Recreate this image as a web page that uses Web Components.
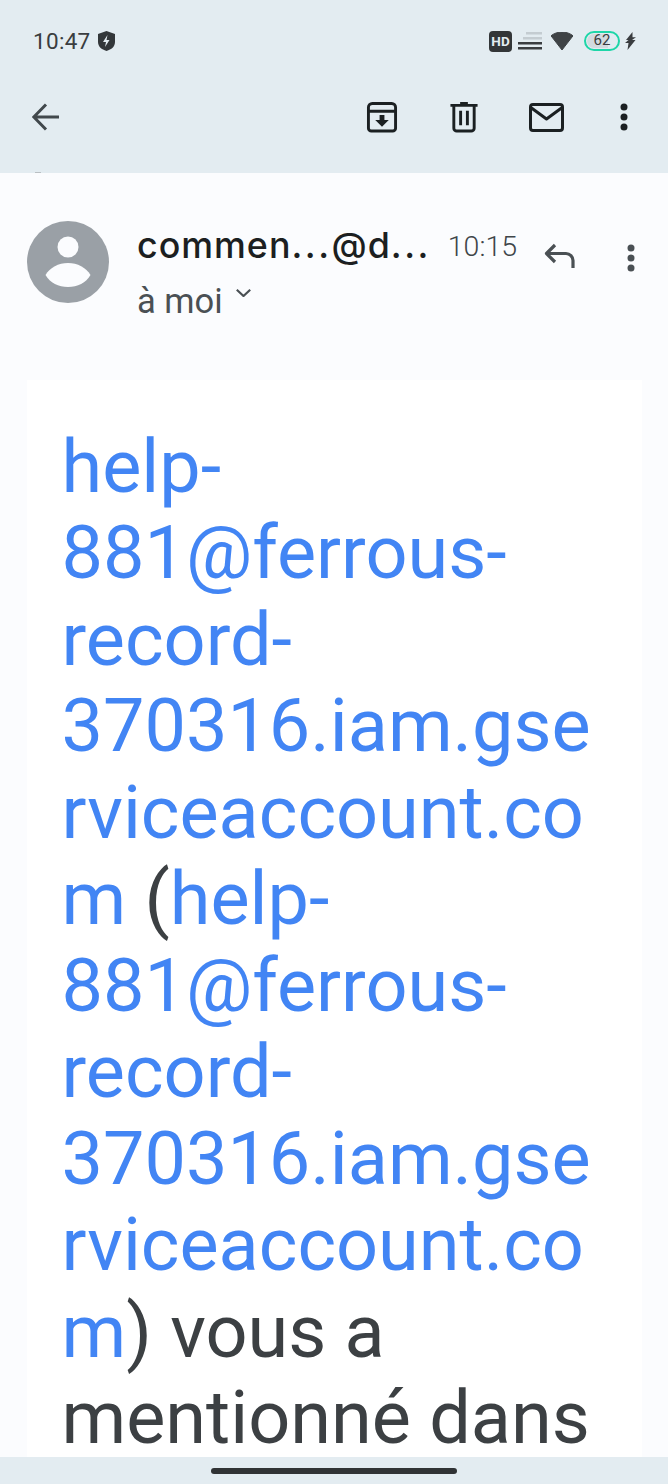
<!DOCTYPE html>
<html lang="fr">
<head>
<meta charset="utf-8">
<title>Mail</title>
<style>
    html, body {
        margin: 0;
        height: 100%;
        overflow: hidden;
    }

    body {
        display: flex;
        flex-direction: column;
        background: #fbfcfe;
        font-family: Roboto, sans-serif;
    }
</style>
</head>
<body>
<status-bar></status-bar>
<app-toolbar></app-toolbar>
<mail-header></mail-header>
<mail-body>
    <a>help-881@ferrous-record-370316.iam.gserviceaccount.com</a> (<a>help-881@ferrous-record-370316.iam.gserviceaccount.com</a>) vous a mentionné dans un commentaire
</mail-body>
<nav-bar></nav-bar>

<script>
class StatusBar extends HTMLElement {
    constructor() {
        super();
        this.attachShadow({ mode: 'open' });
        this.shadowRoot.innerHTML = `
            <style>
                :host {
                    display: flex;
                    align-items: center;
                    flex: none;
                    height: 82px;
                    box-sizing: border-box;
                    padding: 0 32px 0 33px;
                    background: #e3ecf1;
                    color: #3a3d40;
                    font-family: Roboto, sans-serif;
                }

                .time {
                    font-size: 22.5px;
                    letter-spacing: 0.3px;
                    margin-right: 7px;
                }

                .right {
                    margin-left: auto;
                    display: flex;
                    align-items: center;
                }

                svg { display: block; }

                .hd {
                    width: 23px;
                    height: 21px;
                    border-radius: 4px;
                    background: #333638;
                    color: #e3ecf1;
                    font-size: 13.5px;
                    font-weight: 700;
                    line-height: 21px;
                    text-align: center;
                    margin-right: 6px;
                }

                .battery {
                    box-sizing: border-box;
                    width: 36px;
                    height: 20px;
                    border: 2.5px solid #1ed6a8;
                    border-radius: 10px;
                    margin: 0 5px 0 11px;
                    font-size: 15px;
                    text-align: center;
                    background: linear-gradient(90deg, #d3dadf 0 70%, transparent 70%);
                    background-clip: content-box;
                    padding: 1px;
                }

                .battery span {
                    display: block;
                    line-height: 13px;
                }
            </style>

            <span class="time">10:47</span>
            <svg width="17" height="20" viewBox="0 0 17 20">
                <path fill="#33373a" d="M8.5 0 17 3v8c0 4.500-3.500 7.500-8.500 9C3.500 18.500 0 15.500 0 11V3z"/>
                <path fill="#e3ecf1" d="M9.500 4 5 11h3l-1 5 4.500-7h-3z"/>
            </svg>

            <div class="right">
                <div class="hd">HD</div>
                <svg width="24" height="18" viewBox="0 0 24 18">
                    <rect x="8" y="0" width="16" height="2.500" fill="#c4ccd1"/>
                    <rect x="5" y="5" width="19" height="2.500" fill="#c4ccd1"/>
                    <rect x="0" y="10" width="24" height="2.500" fill="#3a3d40"/>
                    <rect x="0" y="15" width="24" height="2.500" fill="#3a3d40"/>
                </svg>
                <svg style="margin-left:9px" width="22" height="18" viewBox="0 0 22 18">
                    <path fill="#3f4346" d="M11 0c4 0 8 1.300 11 3.800L11 18 0 3.800C3 1.300 7 0 11 0z" stroke="#3f4346" stroke-linejoin="round"/>
                </svg>
                <div class="battery"><span>62</span></div>
                <svg width="11" height="18" viewBox="0 0 11 18">
                    <path fill="#3a3d40" d="M7.500 0 1 8h2.500L0 11h3.500L2.500 18 10.500 8H7l4-2.800H7.500z"/>
                </svg>
            </div>
        `;
    }
}

class AppToolbar extends HTMLElement {
    constructor() {
        super();
        this.attachShadow({ mode: 'open' });
        this.shadowRoot.innerHTML = `
            <style>
                :host {
                    display: flex;
                    align-items: center;
                    flex: none;
                    position: relative;
                    height: 91px;
                    box-sizing: border-box;
                    padding: 0 40px 21px 32px;
                    background: #e3ecf1;
                }

                svg { display: block; }

                .actions {
                    margin-left: auto;
                    display: flex;
                    align-items: center;
                }

                .speck {
                    position: absolute;
                    left: 35px;
                    bottom: 0;
                    width: 6px;
                    height: 1px;
                    background: #b9bfc3;
                }
            </style>

            <svg width="28" height="28" viewBox="0 0 28 28" fill="none" stroke="#41484c" stroke-width="3">
                <path d="M27 14H3M14 1.500 1.800 14 14 26.500"/>
            </svg>

            <div class="actions">
                <svg width="32" height="31" viewBox="0 0 32 32" fill="none" stroke="#1b2022" stroke-width="3" stroke-linejoin="round">
                    <path d="M6 1.500h20a4 4 0 0 1 4 4V27a3 3 0 0 1-3 3H5a3 3 0 0 1-3-3V5.500a4 4 0 0 1 4-4zM2 9.500h28"/>
                    <path fill="#1b2022" stroke="none" d="M13.500 13.500h5v5h4.500L16 25.500 9 18.500h4.500z"/>
                </svg>
                <svg style="margin-left:52px" width="28" height="31" viewBox="0 0 28 32" fill="none" stroke="#1b2022" stroke-width="3">
                    <path d="M0 3.500h28M3.500 3.500V27a3 3 0 0 0 3 3h15a3 3 0 0 0 3-3V3.500"/>
                    <path stroke="#1b2022" d="M10 1.500h8"/>
                    <path d="M10.500 9v15M17.500 9v15"/>
                </svg>
                <svg style="margin-left:51px" width="35" height="29" viewBox="0 0 35 29" fill="none" stroke="#1b2022" stroke-width="3" stroke-linejoin="round">
                    <rect x="1.500" y="1.500" width="32" height="26" rx="2.500"/>
                    <path d="M2.500 5 17.500 16 32.500 5"/>
                </svg>
                <svg style="margin-left:56px" width="8" height="28" viewBox="0 0 8 28" fill="#1b2022">
                    <circle cx="4" cy="4" r="3.500"/>
                    <circle cx="4" cy="14" r="3.500"/>
                    <circle cx="4" cy="24" r="3.500"/>
                </svg>
            </div>

            <span class="speck"></span>
        `;
    }
}

class MailHeader extends HTMLElement {
    constructor() {
        super();
        this.attachShadow({ mode: 'open' });
        this.shadowRoot.innerHTML = `
            <style>
                :host {
                    display: flex;
                    flex: none;
                    height: 207px;
                    box-sizing: border-box;
                    padding: 48px 33px 0 27px;
                    background: #fbfcfe;
                    font-family: Inter, sans-serif;
                }

                svg { display: block; }

                .avatar {
                    flex: none;
                    margin-right: 28px;
                }

                .text {
                    width: 300px;
                    padding-top: 2px;
                }

                .from {
                    font-size: 35.8px;
                    letter-spacing: 1px;
                    font-weight: 500;
                    line-height: 44px;
                    color: #1c1f21;
                    white-space: nowrap;
                }

                .from span {
                    letter-spacing: 2.5px;
                }

                .to {
                    display: flex;
                    align-items: center;
                    font-family: Roboto, sans-serif;
                    font-size: 34.5px;
                    line-height: 44px;
                    color: #4a5054;
                    margin-top: 12px;
                }

                .to svg {
                    margin: -17px 0 0 13px;
                }

                .time {
                    font-family: Roboto, sans-serif;
                    font-size: 28.5px;
                    font-weight: 300;
                    line-height: 44px;
                    color: #3f4549;
                    margin: 4px 0 0 11px;
                    flex: none;
                }

                .reply {
                    margin: 22px 0 0 27px;
                    flex: none;
                }

                .more {
                    margin: 23px 0 0 52px;
                    flex: none;
                }
            </style>

            <svg class="avatar" width="82" height="82" viewBox="0 0 82 82">
                <circle cx="41" cy="41" r="41" fill="#9aa0a6"/>
                <circle cx="41" cy="26" r="10.500" fill="#fbfcfe"/>
                <path fill="#fbfcfe" d="M18.500 54C23 46.500 31.500 42 41 42s18 4.500 22.500 12C59 62 50.500 66 41 66s-18-4-22.500-12z"/>
            </svg>

            <div class="text">
                <div class="from">commen<span>...</span>@d<span>...</span></div>
                <div class="to">
                    à moi
                    <svg width="15" height="8" viewBox="0 0 15 8" fill="none" stroke="#4a5054" stroke-width="2.200">
                        <path d="M.8 .8 7.500 7 14.200 .8"/>
                    </svg>
                </div>
            </div>

            <div class="time">10:15</div>

            <svg class="reply" width="31" height="25" viewBox="0 0 31 25" fill="none" stroke="#4a5054" stroke-width="3.200" stroke-linejoin="round">
                <path d="M11 2 2.500 10.500 11 19M2.500 10.500H22a7 7 0 0 1 7 7V25"/>
            </svg>

            <svg class="more" width="8" height="28" viewBox="0 0 8 28" fill="#4a5054">
                <circle cx="4" cy="4" r="3.500"/>
                <circle cx="4" cy="14" r="3.500"/>
                <circle cx="4" cy="24" r="3.500"/>
            </svg>
        `;
    }
}

class MailBody extends HTMLElement {
    constructor() {
        super();
        this.attachShadow({ mode: 'open' });
        this.shadowRoot.innerHTML = `
            <style>
                :host {
                    display: block;
                    flex: 1;
                    min-height: 0;
                    overflow: hidden;
                    padding: 0 26px 0 27px;
                    background: #fbfcfe;
                }

                .card {
                    background: #fff;
                    padding: 44px 36px 0 34.5px;
                    font-family: Roboto, sans-serif;
                    font-size: 73.8px;
                    line-height: 86.45px;
                    color: #3c4043;
                    overflow-wrap: break-word;
                }

                ::slotted(a) {
                    color: #4285f4;
                }
            </style>

            <div class="card"><slot></slot></div>
        `;
    }
}

class NavBar extends HTMLElement {
    constructor() {
        super();
        this.attachShadow({ mode: 'open' });
        this.shadowRoot.innerHTML = `
            <style>
                :host {
                    display: flex;
                    justify-content: center;
                    flex: none;
                    height: 27px;
                    box-sizing: border-box;
                    padding-top: 11px;
                    background: #e3ecf1;
                }

                .pill {
                    width: 246px;
                    height: 6px;
                    border-radius: 3px;
                    background: #303335;
                }
            </style>

            <div class="pill"></div>
        `;
    }
}

customElements.define('status-bar', StatusBar);
customElements.define('app-toolbar', AppToolbar);
customElements.define('mail-header', MailHeader);
customElements.define('mail-body', MailBody);
customElements.define('nav-bar', NavBar);
</script>
</body>
</html>
